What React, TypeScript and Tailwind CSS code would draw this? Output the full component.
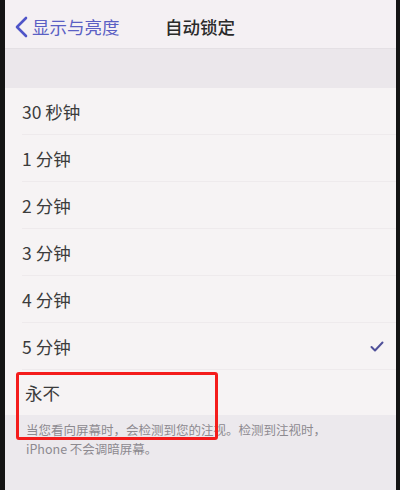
import React from "react";

const items = ["30 秒钟", "1 分钟", "2 分钟", "3 分钟", "4 分钟", "5 分钟"];

export default function App() {
  return (
    <div
      className="w-[400px] h-[490px] overflow-hidden bg-[#141414] flex"
      style={{ fontFamily: '"Noto Sans CJK SC", "Noto Sans", sans-serif' }}
    >
      <div className="w-[5px] shrink-0" />
      <div className="flex-1 flex flex-col bg-[#f1eef1]">
        {/* Nav bar */}
        <div className="h-[49px] flex items-center relative bg-[#f4f0f3] border-b border-[#e4e0e4] pt-[6px]">
          <div className="flex items-center pl-[9px] text-[#5a5fc4]">
            <svg width="14" height="22" viewBox="0 0 14 22" className="mr-[4px]">
              <path d="M12 2 L3 11 L12 20" fill="none" stroke="#4f55c8" strokeWidth="2.6" strokeLinecap="round" strokeLinejoin="round" />
            </svg>
            <span className="text-[17.5px] leading-none">显示与亮度</span>
          </div>
          <div className="absolute left-[160px] top-[6px] bottom-0 flex items-center text-[17.5px] text-[#2a2a2a] font-medium">
            自动锁定
          </div>
        </div>
        {/* gray gap */}
        <div className="h-[39px] bg-[#ebe7eb]" />
        {/* list */}
        <div className="bg-[#f6f3f4] flex flex-col">
          {items.map((t, i) => (
            <div key={t} className="h-[47px] flex items-center pl-[17px]">
              <div className="flex-1 h-full flex items-center border-b border-[#eeeaec] pr-[12px]">
                <span className="text-[17.5px] text-[#3c3c3c] flex-1 pt-[2px]">{t}</span>
                {i === 5 && (
                  <svg width="14" height="11" viewBox="0 0 14 11">
                    <path d="M1.5 6 L5 9.5 L12.5 1.5" fill="none" stroke="#4f5099" strokeWidth="2" strokeLinecap="round" strokeLinejoin="round" />
                  </svg>
                )}
              </div>
            </div>
          ))}
          <div className="h-[45px] flex items-center pl-[20px]">
            <span className="text-[17.5px] text-[#3c3c3c] pt-[2px]">永不</span>
          </div>
        </div>
        {/* footer */}
        <div className="flex-1 bg-[#ece9ed] pl-[21px] pt-[5px] text-[12.5px] leading-[19px] text-[#8d8a90]">
          <div>当您看向屏幕时，会检测到您的注视。检测到注视时，</div>
          <div>iPhone 不会调暗屏幕。</div>
        </div>
      </div>
      <div className="w-[4px] shrink-0" />
      {/* red highlight box */}
      <div className="absolute left-[16px] top-[372px] w-[202px] h-[68px] border-[3px] border-[#f41c1c] rounded-[3px] pointer-events-none" />
    </div>
  );
}
